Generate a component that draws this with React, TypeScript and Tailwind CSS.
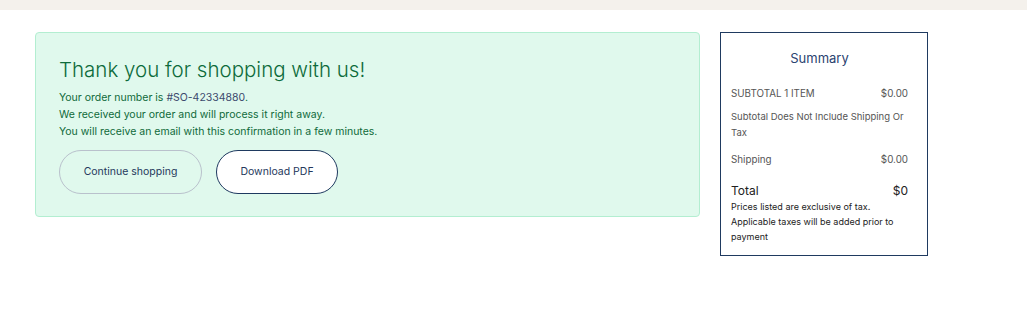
export default function App() {
  return (
    <div className="min-h-[309px] bg-white font-['Inter',sans-serif]">
      <div className="h-[10px] bg-[#f4f1ec]" />
      <div className="flex items-start gap-[20px] pl-[35px] pt-[22px]">
        <div className="w-[665px] h-[185px] rounded-[4px] border border-[#b3eed1] bg-[#e0f9ed] pl-[23px] pt-[22px]">
          <h1 className="text-[20.5px] font-light leading-[30px] text-[#0d6b3b]">
            Thank you for shopping with us!
          </h1>
          <div className="mt-[4px] text-[10.5px] leading-[17px] text-[#0f6a3a]">
            <p>
              Your order number is <span className="text-[#3c4a6e]">#SO-42334880</span>.
            </p>
            <p>We received your order and will process it right away.</p>
            <p>You will receive an email with this confirmation in a few minutes.</p>
          </div>
          <div className="mt-[10px] flex gap-[14px]">
            <button className="h-[44px] w-[143px] rounded-full border border-[#b9c1cc] text-[10.5px] text-[#25385c]">
              Continue shopping
            </button>
            <button className="h-[44px] w-[122px] rounded-full border border-[#1f3a60] bg-white text-[10.5px] text-[#25385c]">
              Download PDF
            </button>
          </div>
        </div>
        <div className="w-[208px] h-[224px] border border-[#1f3a60] pl-[10px] pr-[19px] pt-[15px]">
          <h2 className="text-center text-[13px] leading-[20px] text-[#2b4370]">Summary</h2>
          <div className="mt-[19px] flex justify-between text-[9.8px] leading-[14px] text-[#555]">
            <span>SUBTOTAL 1 ITEM</span>
            <span>$0.00</span>
          </div>
          <p className="mt-[8px] text-[9.5px] leading-[16px] text-[#555]">
            Subtotal Does Not Include Shipping Or Tax
          </p>
          <div className="mt-[12px] flex justify-between text-[9.8px] leading-[14px] text-[#555]">
            <span>Shipping</span>
            <span>$0.00</span>
          </div>
          <div className="mt-[16px] flex justify-between text-[12px] leading-[15px] text-[#222]">
            <span>Total</span>
            <span>$0</span>
          </div>
          <p className="mt-[1px] text-[9px] leading-[15px] text-[#222]">
            Prices listed are exclusive of tax. Applicable taxes will be added prior to payment
          </p>
        </div>
      </div>
    </div>
  );
}
